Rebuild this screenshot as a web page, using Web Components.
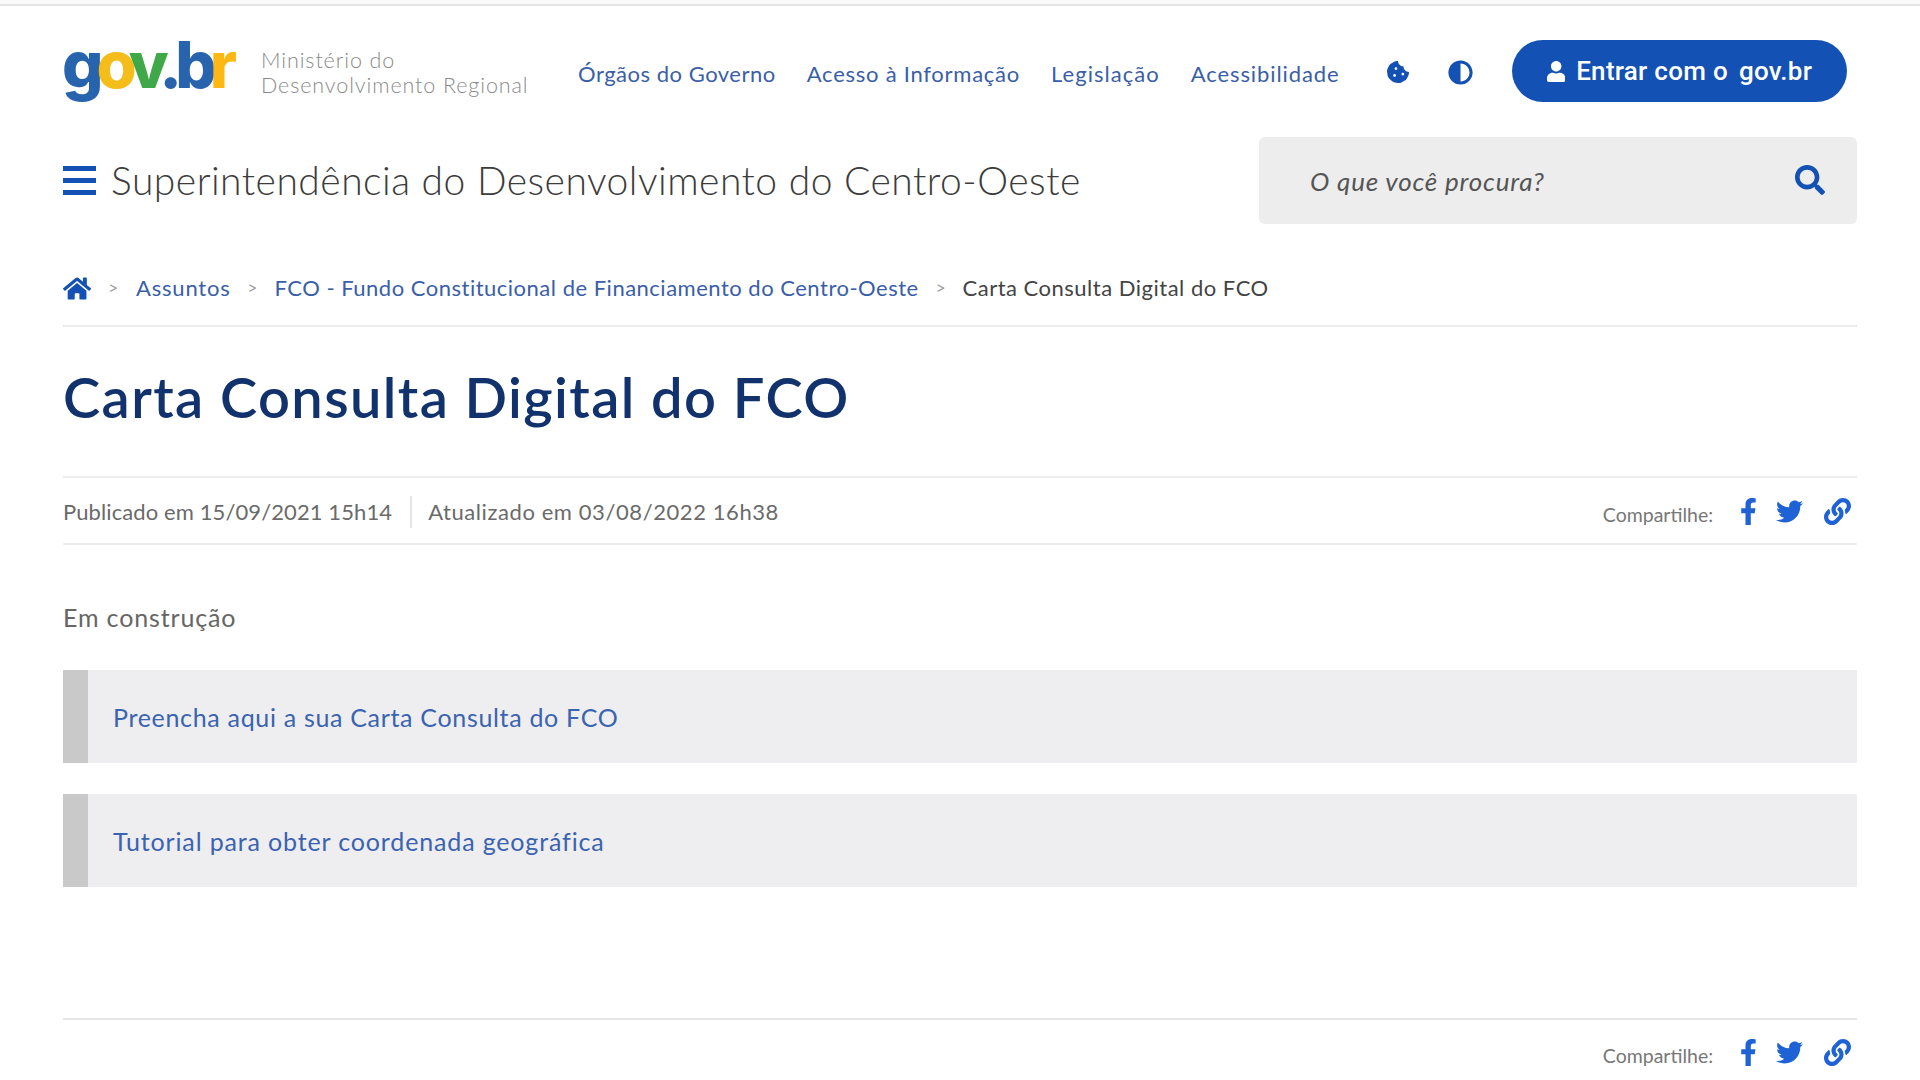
<!DOCTYPE html>
<html lang="pt-BR"><head><meta charset="utf-8"><title>Carta Consulta Digital do FCO</title>
<style>
html{background:#f9f9f9}
html,body{padding:0;height:1080px;overflow:hidden}
html{margin:0}
body{margin:4px 0 0;height:1076px;background:#fff;font-family:Lato,"Open Sans",sans-serif;color:#555;border-top:2px solid #e4e4e4;box-sizing:border-box}
page-shell{display:block;padding:0 63px 0 63px}
</style></head><body>
<page-shell>
  <site-header></site-header>
  <site-bar title-text="Superintendência do Desenvolvimento do Centro-Oeste"></site-bar>
  <bread-crumb></bread-crumb>
  <page-title>Carta Consulta Digital do FCO</page-title>
  <page-meta></page-meta>
  <body-text>Em construção</body-text>
  <link-box style="margin-top:34px;letter-spacing:.68px">Preencha aqui a sua Carta Consulta do FCO</link-box>
  <link-box style="margin-top:31px;letter-spacing:.85px;padding-top:1px">Tutorial para obter coordenada geográfica</link-box>
  <page-foot></page-foot>
</page-shell>
<script>
const P={
facebook:[320,"M279.14 288l14.22-92.66h-88.91v-60.13c0-25.35 12.42-50.06 52.24-50.06h40.42V6.26S260.43 0 225.36 0c-73.22 0-121.08 44.38-121.08 124.72v70.62H22.89V288h81.39v224h100.17V288z"],
twitter:[512,"M459.37 151.716c.325 4.548.325 9.097.325 13.645 0 138.72-105.583 298.558-298.558 298.558-59.452 0-114.68-17.219-161.137-47.106 8.447.974 16.568 1.299 25.34 1.299 49.055 0 94.213-16.568 130.274-44.832-46.132-.975-84.792-31.188-98.112-72.772 6.498.974 12.995 1.624 19.818 1.624 9.421 0 18.843-1.3 27.614-3.573-48.081-9.747-84.143-51.98-84.143-102.985v-1.299c13.969 7.797 30.214 12.67 47.431 13.319-28.264-18.843-46.781-51.005-46.781-87.391 0-19.492 5.197-37.36 14.294-52.954 51.655 63.675 129.3 105.258 216.365 109.807-1.624-7.797-2.599-15.918-2.599-24.04 0-57.828 46.782-104.934 104.934-104.934 30.213 0 57.502 12.67 76.67 33.137 23.715-4.548 46.456-13.32 66.599-25.34-7.798 24.366-24.366 44.833-46.132 57.827 21.117-2.273 41.584-8.122 60.426-16.243-14.292 20.791-32.161 39.308-52.628 54.253z"],
link:[512,"M326.612 185.391c59.747 59.809 58.927 155.698.36 214.59-.11.12-.24.25-.36.37l-67.2 67.2c-59.27 59.27-155.699 59.262-214.96 0-59.27-59.26-59.27-155.7 0-214.96l37.106-37.106c9.84-9.84 26.786-3.3 27.294 10.606.648 17.722 3.826 35.527 9.69 52.721 1.986 5.822.567 12.262-3.783 16.612l-13.087 13.087c-28.026 28.026-28.905 73.66-1.155 101.96 28.024 28.579 74.086 28.749 102.325.51l67.2-67.19c28.191-28.191 28.073-73.757 0-101.83-3.701-3.694-7.429-6.564-10.341-8.569a16.037 16.037 0 0 1-6.947-12.606c-.396-10.567 3.348-21.456 11.698-29.806l21.054-21.055c5.521-5.521 14.182-6.199 20.584-1.731a152.482 152.482 0 0 1 20.522 17.197zM467.547 44.449c-59.261-59.262-155.69-59.27-214.96 0l-67.2 67.2c-.12.12-.25.25-.36.37-58.566 58.892-59.387 154.781.36 214.59a152.454 152.454 0 0 0 20.521 17.196c6.402 4.468 15.064 3.789 20.584-1.731l21.054-21.055c8.35-8.35 12.094-19.239 11.698-29.806a16.037 16.037 0 0 0-6.947-12.606c-2.912-2.005-6.64-4.875-10.341-8.569-28.073-28.073-28.191-73.639 0-101.83l67.2-67.19c28.239-28.239 74.3-28.069 102.325.51 27.75 28.3 26.872 73.934-1.155 101.96l-13.087 13.087c-4.35 4.35-5.769 10.79-3.783 16.612 5.864 17.194 9.042 34.999 9.69 52.721.509 13.906 17.454 20.446 27.294 10.606l37.106-37.106c59.271-59.259 59.271-155.699.001-214.959z"],
search:[512,"M505 442.7L405.3 343c-4.5-4.5-10.6-7-17-7H372c27.6-35.3 44-79.7 44-128C416 93.1 322.9 0 208 0S0 93.1 0 208s93.1 208 208 208c48.3 0 92.7-16.4 128-44v16.3c0 6.4 2.5 12.5 7 17l99.7 99.7c9.4 9.4 24.6 9.4 33.9 0l28.3-28.3c9.4-9.4 9.4-24.6.1-34zM208 336c-70.7 0-128-57.2-128-128 0-70.7 57.2-128 128-128 70.7 0 128 57.2 128 128 0 70.7-57.2 128-128 128z"],
home:[576,"M280.37 148.26L96 300.11V464a16 16 0 0 0 16 16l112.06-.29a16 16 0 0 0 15.92-16V368a16 16 0 0 1 16-16h64a16 16 0 0 1 16 16v95.64a16 16 0 0 0 16 16.05L464 480a16 16 0 0 0 16-16V300L295.67 148.26a12.19 12.19 0 0 0-15.3 0zM571.6 251.47L488 182.56V44.05a12 12 0 0 0-12-12h-56a12 12 0 0 0-12 12v72.61L318.47 43a48 48 0 0 0-61 0L4.34 251.47a12 12 0 0 0-1.6 16.9l25.5 31A12 12 0 0 0 45.15 301l235.22-193.74a12.19 12.19 0 0 1 15.3 0L530.9 301a12 12 0 0 0 16.9-1.6l25.5-31a12 12 0 0 0-1.7-16.93z"],
user:[448,"M224 256c70.7 0 128-57.3 128-128S294.7 0 224 0 96 57.3 96 128s57.3 128 128 128zm89.6 32h-16.7c-22.2 10.2-46.9 16-72.9 16s-50.6-5.8-72.9-16h-16.7C60.2 288 0 348.2 0 422.4V464c0 26.5 21.5 48 48 48h352c26.5 0 48-21.5 48-48v-41.6c0-74.2-60.2-134.4-134.4-134.4z"],
cookie:[512,"M510.52 255.82c-69.97-.85-126.47-57.69-126.47-127.86-70.17 0-127-56.49-127.86-126.45-27.26-4.14-55.13.3-79.72 12.82l-69.13 35.22a132.221 132.221 0 0 0-57.79 57.81l-35.1 68.88a132.645 132.645 0 0 0-12.82 80.95l12.08 76.27a132.521 132.521 0 0 0 37.16 72.96l54.77 54.76a132.036 132.036 0 0 0 72.71 37.06l76.71 12.15c27.51 4.36 55.7-.11 80.53-12.76l69.13-35.21a132.273 132.273 0 0 0 57.79-57.81l35.1-68.88c12.56-24.64 17.01-52.58 12.91-79.91zM176 368c-17.67 0-32-14.33-32-32s14.33-32 32-32 32 14.33 32 32-14.33 32-32 32zm32-160c-17.67 0-32-14.33-32-32s14.33-32 32-32 32 14.33 32 32-14.33 32-32 32zm160 128c-17.67 0-32-14.33-32-32s14.33-32 32-32 32 14.33 32 32-14.33 32-32 32z"],
adjust:[512,"M8 256c0 136.966 111.033 248 248 248s248-111.034 248-248S392.966 8 256 8 8 119.033 8 256zm248 184V72c101.705 0 184 82.311 184 184 0 101.705-82.311 184-184 184z"]
};
function def(name,html){customElements.define(name,class extends HTMLElement{connectedCallback(){if(this.shadowRoot)return;const r=this.attachShadow({mode:"open"});r.innerHTML=typeof html==="function"?html(this):html;}})}
def("fa-icon",h=>{const n=h.getAttribute("name"),s=P[n];return `<style>:host{display:inline-flex;align-items:center;justify-content:center;flex:none;color:inherit}svg{display:block;height:var(--s,20px);width:auto;fill:currentColor}</style><svg viewBox="0 0 ${s[0]} 512"><path d="${s[1]}"/></svg>`});
def("site-header",`<style>
:host{display:flex;align-items:center;height:62px;margin-top:34px}
.logo{font:800 65px/62px Inter,sans-serif;letter-spacing:-7px;width:173px;height:62px;white-space:nowrap;margin:-12px 0 0 -1px;flex:none;padding-right:1px}
.g{color:#2864ae}.o{color:#f5bd1a}.v{color:#3fa848}.b{color:#2864ae}.r{color:#fdb813}
.min{margin-left:25px;width:280px;font:300 21.5px/25px Lato,sans-serif;color:#8a8a8a;flex:none;letter-spacing:.9px;position:relative;top:2px}
nav{display:flex;margin-left:37px;gap:31px;font:400 22px/30px Lato,sans-serif;color:#3a5ea8;white-space:nowrap;position:relative;top:3px}
.ic{color:#1351b4;--s:22px;margin-left:47px;display:flex;gap:39px;align-items:center;position:relative;top:1px}
.btn{margin-left:auto;margin-right:10px;width:335px;height:62px;border-radius:31px;background:#1351b4;color:#fff;display:flex;align-items:center;justify-content:center;gap:11px;font:500 26px Roboto,sans-serif;letter-spacing:.28px;--s:21px;white-space:nowrap;box-sizing:border-box}
.btn b{font-weight:500;margin-left:11px}
</style>
<div class="logo"><span class="g">g</span><span class="o">o</span><span class="v">v</span><span class="b">.b</span><span class="r">r</span></div>
<div class="min">Ministério do<br>Desenvolvimento Regional</div>
<nav><span style="letter-spacing:.51px">Órgãos do Governo</span><span style="letter-spacing:.74px">Acesso à Informação</span><span style="letter-spacing:1.04px">Legislação</span><span style="letter-spacing:.9px">Acessibilidade</span></nav>
<div class="ic"><fa-icon name="cookie"></fa-icon><fa-icon name="adjust" style="--s:25px"></fa-icon></div>
<div class="btn"><fa-icon name="user"></fa-icon><span>Entrar com o<b>gov.br</b></span></div>`);
def("site-bar",h=>`<style>
:host{display:flex;align-items:center;justify-content:space-between;height:87px;margin-top:35px}
.l{display:flex;align-items:center;gap:15px}
.bars{display:flex;flex-direction:column;gap:7px;width:33px}
.bars i{display:block;height:5px;background:#1351b4}
.t{font:300 39px/50px Lato,sans-serif;color:#3c3c3c;letter-spacing:.49px;white-space:nowrap;position:relative;top:-1px}
.s{width:598px;height:87px;background:#ededee;border-radius:6px;display:flex;align-items:center;justify-content:space-between;padding:0 32px 0 51px;box-sizing:border-box;font:italic 400 26px Lato,sans-serif;letter-spacing:.8px;color:#555;--s:30px}
.s fa-icon{color:#1351b4;position:relative;top:-1px}
</style>
<div class="l"><div class="bars"><i></i><i></i><i></i></div><div class="t">${h.getAttribute("title-text")}</div></div>
<div class="s"><span>O que você procura?</span><fa-icon name="search"></fa-icon></div>`);
def("bread-crumb",`<style>
:host{display:flex;align-items:center;margin-top:34px;border-bottom:2px solid #ececec;padding-bottom:7px;box-sizing:border-box;height:69px;font:400 22px/30px Lato,sans-serif;color:#3a5ea8;letter-spacing:.5px;white-space:nowrap}
fa-icon{--s:25px;color:#1351b4}
.s{color:#9a9a9a;font-size:17px;margin:0 17px;letter-spacing:0}
.h{margin-right:18px}
.a{letter-spacing:.8px}
.c{color:#444}
</style>
<fa-icon name="home"></fa-icon><span class="s h">&gt;</span><span class="a">Assuntos</span><span class="s">&gt;</span><span>FCO - Fundo Constitucional de Financiamento do Centro-Oeste</span><span class="s">&gt;</span><span class="c">Carta Consulta Digital do FCO</span>`);
def("page-title",`<style>
:host{display:block;font:600 56px/70px Lato,sans-serif;color:#12326e;height:151px;padding-top:35px;box-sizing:border-box;border-bottom:2px solid #ececec;letter-spacing:1.4px}
</style><slot></slot>`);
def("share-links",`<style>
:host{display:flex;align-items:center;color:#1e62d6;--s:27px}
.t{font:400 19.5px Lato,sans-serif;color:#777;margin-right:27px;position:relative;top:3px}
.i{display:flex;align-items:center;gap:21px;margin-right:6px}
.f{margin-right:-2px}
</style><span class="t">Compartilhe:</span><div class="i"><fa-icon class="f" name="facebook"></fa-icon><fa-icon name="twitter"></fa-icon><fa-icon name="link"></fa-icon></div>`);
def("page-meta",`<style>
:host{display:flex;align-items:center;justify-content:space-between;height:67px;padding-top:2px;border-bottom:2px solid #ececec;box-sizing:border-box;font:400 22px Lato,sans-serif;color:#6a6a6a}
.l{display:flex;align-items:center}
.p{letter-spacing:.1px}
.a{border-left:2px solid #e6e6e6;margin-left:18px;padding-left:16px;line-height:32px;letter-spacing:.58px}
</style><div class="l"><span class="p">Publicado em 15/09/2021 15h14</span><span class="a">Atualizado em 03/08/2022 16h38</span></div><share-links></share-links>`);
def("body-text",`<style>:host{display:block;margin-top:53px;font:400 25px/38px Lato,sans-serif;color:#666;letter-spacing:.85px}</style><slot></slot>`);
def("link-box",`<style>
:host{display:flex;align-items:center;height:93px;background:#eeeef0;border-left:25px solid #c9c9ca;padding-left:25px;box-sizing:border-box;font:400 25px Lato,sans-serif;color:#3a63b0;letter-spacing:.78px}
</style><span><slot></slot></span>`);
def("page-foot",`<style>:host{display:flex;justify-content:flex-end;align-items:center;margin-top:131px;border-top:2px solid #e6e6e6;height:67px;box-sizing:border-box}</style><share-links></share-links>`);
</script>
</body></html>
